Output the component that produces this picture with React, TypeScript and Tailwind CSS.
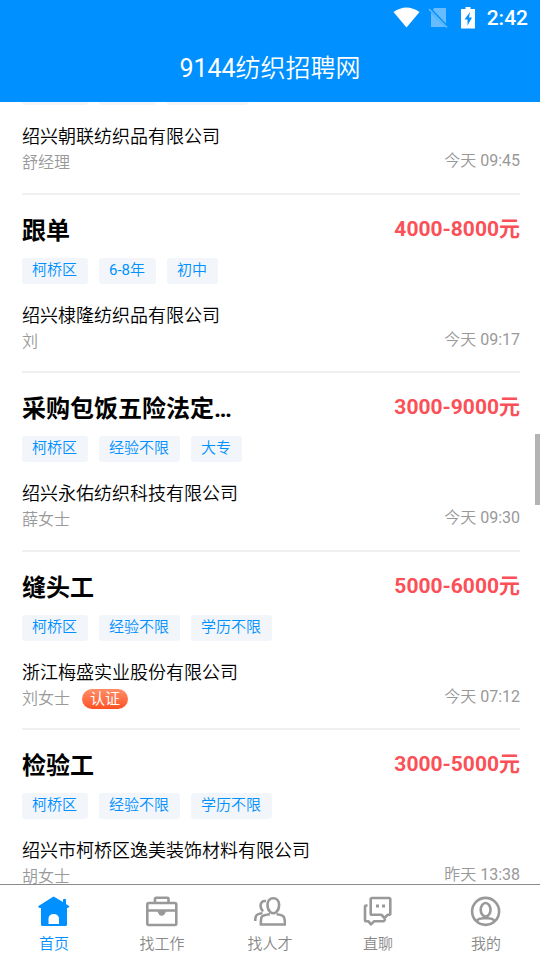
import type { ReactNode } from "react";

type Job = {
  title: string;
  salary: string;
  tags: string[];
  company: string;
  contact: string;
  time: string;
  verified?: boolean;
};

const jobs: Job[] = [
  { title: "挡车工", salary: "4000-6000元", tags: ["柯桥区", "1-3年", "学历不限"], company: "绍兴朝联纺织品有限公司", contact: "舒经理", time: "今天 09:45" },
  { title: "跟单", salary: "4000-8000元", tags: ["柯桥区", "6-8年", "初中"], company: "绍兴棣隆纺织品有限公司", contact: "刘", time: "今天 09:17" },
  { title: "采购包饭五险法定…", salary: "3000-9000元", tags: ["柯桥区", "经验不限", "大专"], company: "绍兴永佑纺织科技有限公司", contact: "薛女士", time: "今天 09:30" },
  { title: "缝头工", salary: "5000-6000元", tags: ["柯桥区", "经验不限", "学历不限"], company: "浙江梅盛实业股份有限公司", contact: "刘女士", time: "今天 07:12", verified: true },
  { title: "检验工", salary: "3000-5000元", tags: ["柯桥区", "经验不限", "学历不限"], company: "绍兴市柯桥区逸美装饰材料有限公司", contact: "胡女士", time: "昨天 13:38" },
];

// Chinese glyphs are set in a lighter weight than the digits beside them.
function Mixed({ text }: { text: string }) {
  return text.split(/([\d:-]+)/).map((part, i) =>
    i % 2 === 1 ? (
      <span key={i} className="font-normal">
        {part}
      </span>
    ) : (
      part
    ),
  );
}

function JobItem({ job }: { job: Job }) {
  return (
    <li className="border-b-2 border-[#f0f0f0] pt-[19px] pb-[18px] even:pb-[17px]">
      <div className="flex items-start justify-between">
        <h2 className="text-[24px] leading-[35px] font-bold text-black">{job.title}</h2>
        <span className="text-[21px] leading-[31px] font-bold text-[#fb5057]">{job.salary}</span>
      </div>
      <div className="mt-[9px] flex gap-[11px]">
        {job.tags.map((tag) => (
          <span key={tag} className="h-[26px] rounded-[3px] bg-[#f2f6fb] pr-[11px] pl-[10px] text-[15px] leading-[24px] text-[#0090ff]">
            <Mixed text={tag} />
          </span>
        ))}
      </div>
      <p className="mt-[19px] text-[18px] leading-[26px] text-black">{job.company}</p>
      <div className="flex h-[25px] items-start justify-between text-[16px] leading-[25px] text-[#999]">
        <span className="flex items-center gap-3">
          {job.contact}
          {job.verified && (
            <span className="h-5 w-[46px] rounded-full bg-linear-to-b from-[#ff8d66] to-[#ff4f22] text-center text-[15px] leading-5 font-normal text-white">
              认证
            </span>
          )}
        </span>
        <time className="leading-[22px]">
          <Mixed text={job.time} />
        </time>
      </div>
    </li>
  );
}

const tabs: { label: string; icon: ReactNode }[] = [
  {
    label: "首页",
    icon: (
      <path
        fill="currentColor"
        stroke="none"
        fillRule="evenodd"
        d="M15.500 .5 25 6V3.500Q26.500 2 28 3.500V8L31.300 10.300Q31.500 12 29 12V28.500Q29 30 27.500 30H4.500Q3 30 3 28.500V12Q-.5 12 .5 10ZM10.500 28H21V22.500Q20.500 18 15.700 18T10.500 22.500Z"
      />
    ),
  },
  {
    label: "找工作",
    icon: (
      <>
        <rect x="1.300" y="7" width="29" height="22" rx="1.500" />
        <path d="M9 7V3Q9 1.800 10.200 1.800H21.300Q22.500 1.800 22.500 3V7M1 14.500H30.500" />
        <path d="M11.500 15Q12.500 19.800 15.700 19.800T20 15Z" fill="currentColor" stroke="none" />
      </>
    ),
  },
  {
    label: "找人才",
    icon: (
      <>
        <path d="M16.200 16Q13.500 13.500 13.500 9C13.500 5 15.800 2.200 19.300 2.200S25.100 5 25.100 9Q25.100 13.500 22.400 16Q20.700 17.300 19.300 17.300T16.200 16Z" />
        <path d="M16 18.300Q10 19 8 20.500Q6.800 21.800 6.800 28.500H31Q31 22.500 29.500 20.500Q28 19 22.600 18.300" />
        <path d="M12 5Q7 4.500 6.500 9.500Q6.500 12.500 9 15.500M8.500 17.300Q3 18 2 20Q1.200 21.500 1.200 25" />
      </>
    ),
  },
  {
    label: "直聊",
    icon: (
      <>
        <path d="M10 2H27Q28.300 2 28.300 3.300V17.500Q28.300 18.800 27 18.800H25.500L22.500 22 19.500 18.800H10Q8.700 18.800 8.700 17.500V3.300Q8.700 2 10 2ZM5.500 9.500H4.300Q3 9.500 3 10.800V24Q3 25.300 4.300 25.300H6.500L9 28.300 12 25.300H21.500L23.500 23" />
        <path d="M14 10H17M20 10H23" strokeWidth="3" />
      </>
    ),
  },
  {
    label: "我的",
    icon: (
      <>
        <circle cx="15.600" cy="15.400" r="13.500" />
        <ellipse cx="15.600" cy="13.800" rx="4.900" ry="6.800" />
        <path d="M6 25Q9 22.300 13 22.300H18.200Q22.200 22.300 25.200 25" />
      </>
    ),
  },
];

export default function App() {
  return (
    <div className="flex h-screen flex-col overflow-hidden bg-white font-['Roboto','Noto_Sans_CJK_SC',sans-serif] font-[350]">
      <header className="shrink-0 bg-[#0090ff] text-white">
        <div className="flex h-9 items-center justify-end pr-3">
          <svg className="h-[22px] w-[27px]" viewBox="0 0 27 22" fill="currentColor" aria-hidden="true">
            <path d="M.5 5Q13.500-4 26.500 5L13.500 20.500Z" />
          </svg>
          <svg className="ml-[8px] h-[22px] w-[20px] opacity-40" viewBox="0 0 20 22" aria-hidden="true">
            <path d="M6 1H18V16.500L5 3ZM3 5.500 17.500 20H3Z" fill="currentColor" />
            <path d="M1 2 19 20.500" stroke="currentColor" strokeWidth="1.500" />
          </svg>
          <svg className="ml-[13px] h-[22px] w-[15px]" viewBox="0 0 15 22" aria-hidden="true">
            <path d="M0 2H4.500V0H9.500V2H14V21.500H0Z" fill="currentColor" />
            <path d="M9 5 3.500 12.500H6.500V18.500L11 10.500H8Z" fill="#0090ff" />
          </svg>
          <span className="ml-[11px] text-[21px] leading-9 font-medium">2:42</span>
        </div>
        <h1 className="h-[66px] text-center text-[25px] leading-[65px] font-[350]">
          <Mixed text="9144纺织招聘网" />
        </h1>
      </header>

      <main className="relative min-h-0 flex-1 overflow-hidden">
        <ul className="-mt-[86px] pr-5 pl-[22px]">
          {jobs.map((job) => (
            <JobItem key={job.title} job={job} />
          ))}
        </ul>
        <div className="absolute top-[332px] right-0 h-[71px] w-[5px] bg-[#b4b4b4]" />
      </main>

      <nav className="flex h-[76px] shrink-0 border-t border-[#8c8c8c] bg-white">
        {tabs.map((tab, i) => (
          <button
            key={tab.label}
            type="button"
            className={`flex flex-1 flex-col items-center pt-[11px] text-[15px] leading-[22px] ${i === 0 ? "text-[#0090ff]" : "text-[#888]"}`}
          >
            <svg className={`mb-[5px] h-8 w-8 ${i === 0 ? "" : "text-[#999]"}`} viewBox="0 0 32 32" fill="none" stroke="currentColor" strokeWidth="2.600" strokeLinejoin="round" aria-hidden="true">
              {tab.icon}
            </svg>
            {tab.label}
          </button>
        ))}
      </nav>
    </div>
  );
}
